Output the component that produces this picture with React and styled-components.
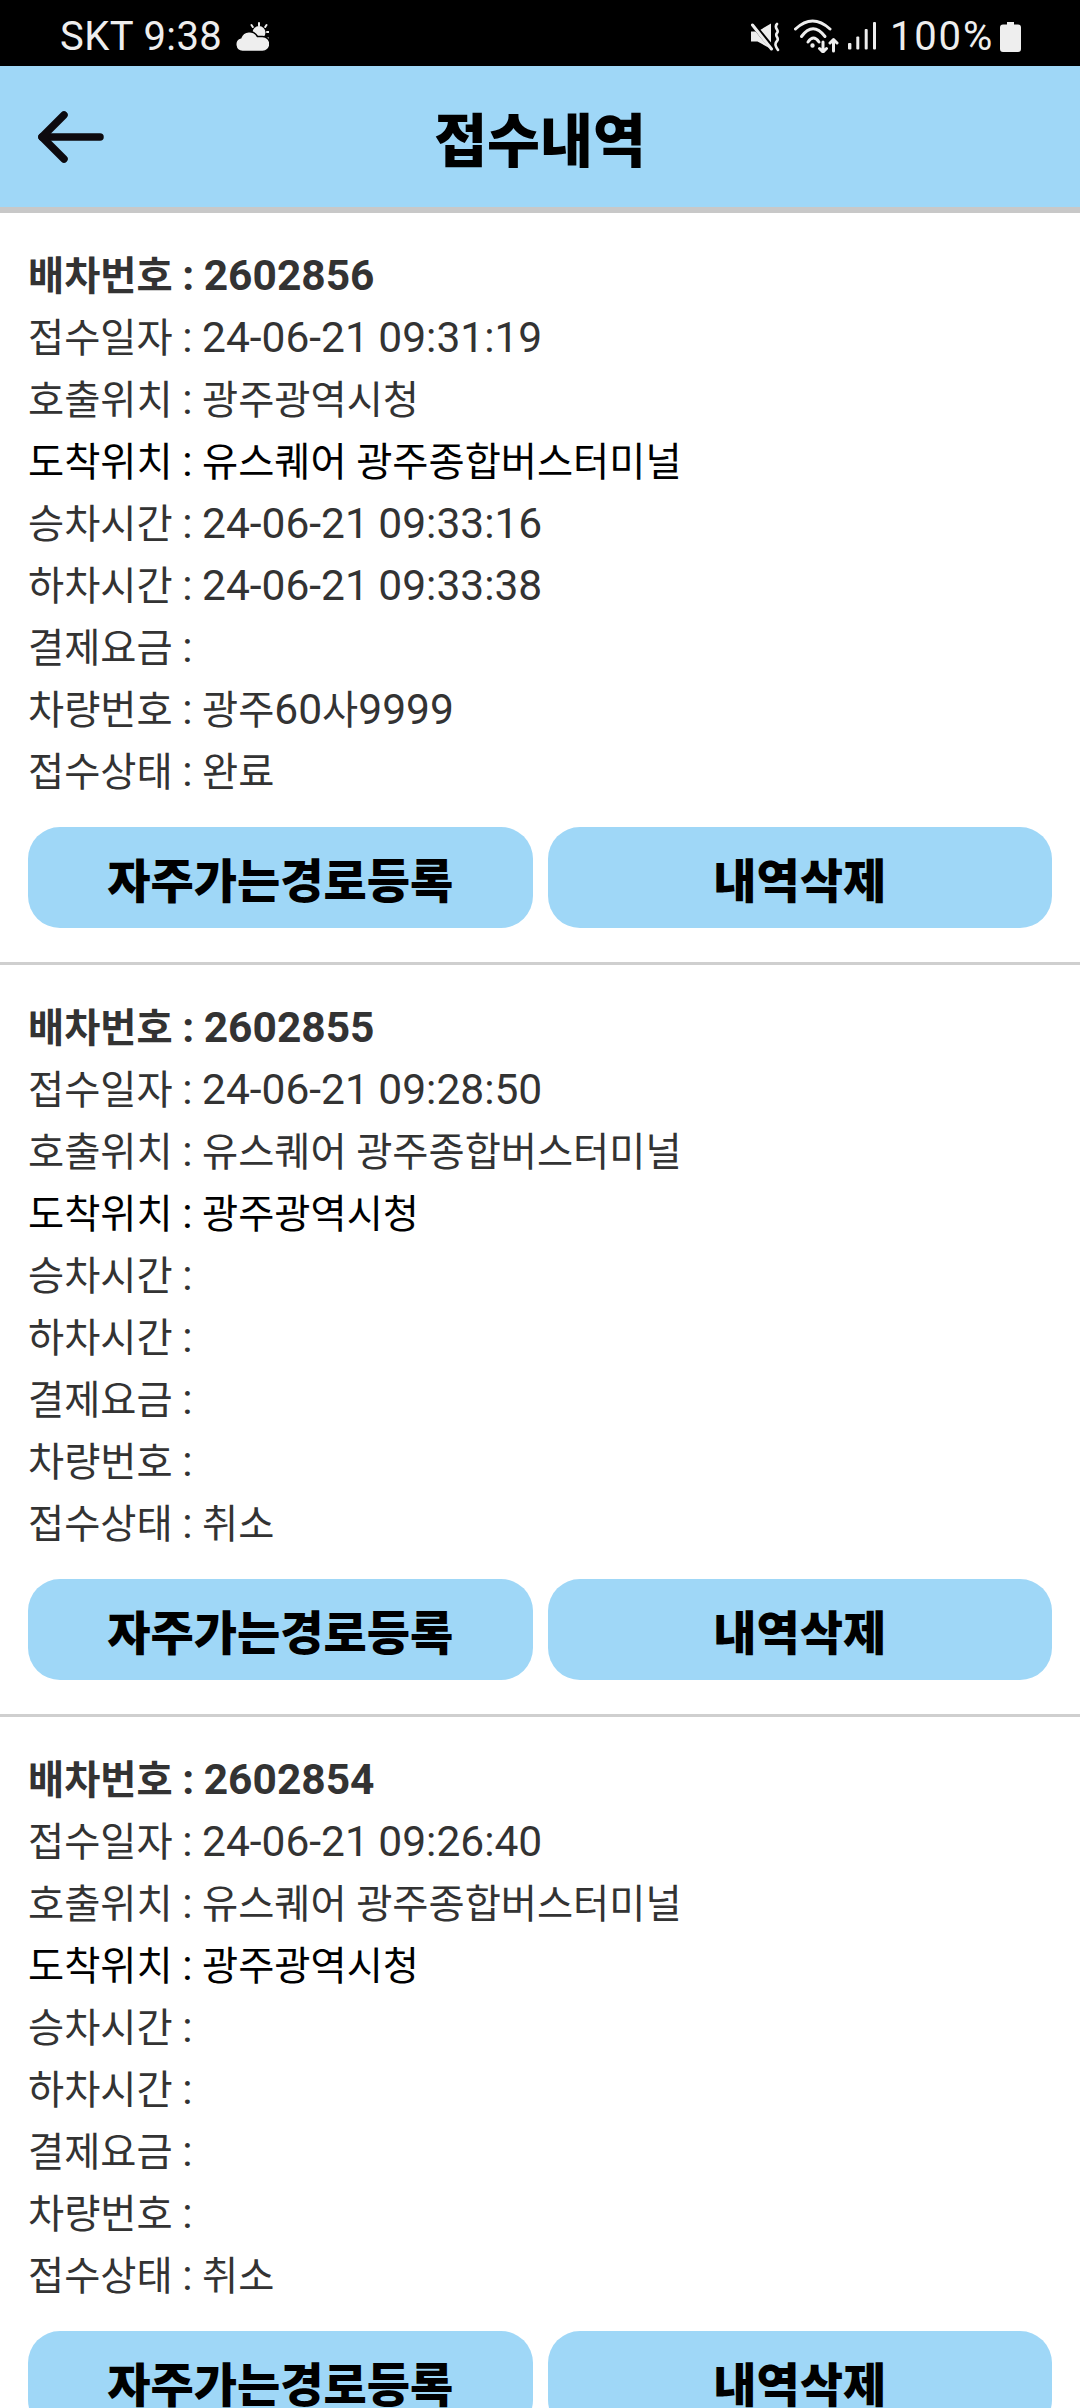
import React from 'react'
import styled, { createGlobalStyle } from 'styled-components'

const GlobalStyle = createGlobalStyle`
    html, body {
        margin: 0;
        padding: 0;
        background: #fff;
    }
    body {
        font-family: Roboto, "Noto Sans CJK KR", sans-serif;
    }
`;

const receipts = [
    {
        id: '2602856',
        date: '24-06-21 09:31:19',
        from: '광주광역시청',
        to: '유스퀘어 광주종합버스터미널',
        board: '24-06-21 09:33:16',
        drop: '24-06-21 09:33:38',
        fare: '',
        car: '광주60사9999',
        status: '완료',
    },
    {
        id: '2602855',
        date: '24-06-21 09:28:50',
        from: '유스퀘어 광주종합버스터미널',
        to: '광주광역시청',
        board: '',
        drop: '',
        fare: '',
        car: '',
        status: '취소',
    },
    {
        id: '2602854',
        date: '24-06-21 09:26:40',
        from: '유스퀘어 광주종합버스터미널',
        to: '광주광역시청',
        board: '',
        drop: '',
        fare: '',
        car: '',
        status: '취소',
    },
];

// hangul runs get their own span, the phone's korean font is narrower than Noto
function mixed(text) {
    return text.split(/([가-힣]+)/).map((part, i) =>
        /[가-힣]/.test(part) ? <Hangul key={i}>{part}</Hangul> : part
    )
}

function WeatherIcon() {
    return (
        <svg width="34" height="40" viewBox="0 13 34 40" fill="#eee">
            <circle cx="24" cy="32.500" r="6.5" />
            <path d="M24 23v2.500M16.500 25l1.300 2M31.500 25l-1.300 2M33.500 32H32M33.500 38.500H32" stroke="#eee" strokeWidth="2" strokeLinecap="round" />
            <path d="M7.500 51.500a7 7 0 0 1-1.800-13.700A9.300 9.300 0 0 1 22.500 36.500h5a7.500 7.500 0 0 1 0 15z" stroke="#000" strokeWidth="1.600" />
        </svg>
    )
}

function MuteIcon() {
    return (
        <svg width="30" height="40" viewBox="0 13 30 40" fill="none">
            <path d="M1 31.500h6.500L21 23.500v25.500L7.500 41.500H1z" fill="#eee" />
            <path d="M1 22l23 28" stroke="#000" strokeWidth="5" />
            <path d="M2.500 25l19 24" stroke="#eee" strokeWidth="3" strokeLinecap="round" />
            <path d="M27 24c-4 4 3 6 0 9s3 5 0 8-1 6 1 9" stroke="#eee" strokeWidth="2.600" strokeLinecap="round" />
        </svg>
    )
}

function WifiIcon() {
    return (
        <svg width="45" height="40" viewBox="0 13 45 40" fill="none" stroke="#eee" strokeWidth="3" strokeLinecap="round" strokeLinejoin="round">
            <path d="M1.500 29Q18.500 13 36 29" />
            <path d="M7.500 36.500Q19 21 31 36.500" />
            <path d="M14 42Q19.500 34 25 42" />
            <circle cx="18.500" cy="45.500" r="1.500" fill="#eee" strokeWidth="1.400" />
            <path d="M29 42v10M25.500 48.500L29 52l3.500-3.500" />
            <path d="M39.500 51V39.500M36 43l3.500-3.500L43 43" />
        </svg>
    )
}

function SignalIcon() {
    return (
        <svg width="28" height="40" viewBox="0 13 28 40" fill="#eee">
            <rect x="0" y="43" width="3.400" height="6.500" rx="1" />
            <rect x="8.300" y="36.500" width="3" height="13" rx="1" />
            <rect x="16.700" y="29" width="3" height="20.500" rx="1" />
            <rect x="25" y="22" width="3" height="27.500" rx="1" />
        </svg>
    )
}

function BatteryIcon() {
    return (
        <svg width="21" height="40" viewBox="0 13 21 40" fill="#eee">
            <path d="M7 22h7v2.500h4a3 3 0 0 1 3 3V49a3 3 0 0 1-3 3H3a3 3 0 0 1-3-3V27.500a3 3 0 0 1 3-3h4z" />
        </svg>
    )
}

function BackIcon() {
    return (
        <svg width="68" height="54" viewBox="0 0 68 54" fill="none" stroke="#0d0a0f" strokeWidth="7.500" strokeLinecap="round" strokeLinejoin="round">
            <path d="M63 27H5" />
            <path d="M27 5L5 27l22 22" />
        </svg>
    )
}

function Row({ label, value, strong, dark }) {
    return (
        <InfoRow $strong={strong} $dark={dark}>
            {mixed(`${label} : ${value}`)}
        </InfoRow>
    )
}

function App() {
    return (
        <Screen>
            <GlobalStyle />
            <StatusBar>
                <StatusLeft>
                    <Carrier>SKT 9:38</Carrier>
                    <WeatherIcon />
                </StatusLeft>
                <StatusRight>
                    <MuteIcon />
                    <IconGap $left={14}><WifiIcon /></IconGap>
                    <IconGap $left={9}><SignalIcon /></IconGap>
                    <Percent>100%</Percent>
                    <IconGap $left={6}><BatteryIcon /></IconGap>
                </StatusRight>
            </StatusBar>
            <Header>
                <BackButton>
                    <BackIcon />
                </BackButton>
                <Title>접수내역</Title>
            </Header>
            {receipts.map((item) => (
                <Card key={item.id}>
                    <Row label="배차번호" value={item.id} strong />
                    <Row label="접수일자" value={item.date} />
                    <Row label="호출위치" value={item.from} />
                    <Row label="도착위치" value={item.to} dark />
                    <Row label="승차시간" value={item.board} />
                    <Row label="하차시간" value={item.drop} />
                    <Row label="결제요금" value={item.fare} />
                    <Row label="차량번호" value={item.car} />
                    <Row label="접수상태" value={item.status} />
                    <Buttons>
                        <ActionButton>자주가는경로등록</ActionButton>
                        <ActionButton>내역삭제</ActionButton>
                    </Buttons>
                </Card>
            ))}
        </Screen>
    )
}

const Screen = styled.div`
    width: 1080px;
    height: 2408px;
    overflow: hidden;
    background: #fff;
`;

const StatusBar = styled.div`
    height: 66px;
    box-sizing: border-box;
    padding: 0 59px 0 60px;
    background: #000;
    color: #eee;
    display: flex;
    align-items: center;
    justify-content: space-between;
    font-size: 40px;
`;

const StatusLeft = styled.div`
    display: flex;
    align-items: center;
    gap: 13px;
`;

const Carrier = styled.span`
    letter-spacing: 0.4px;
    padding-top: 7px;
`;

const StatusRight = styled.div`
    display: flex;
    align-items: center;
`;

const IconGap = styled.div`
    display: flex;
    margin-left: ${(p) => p.$left}px;
`;

const Percent = styled.span`
    margin-left: 14px;
    letter-spacing: 1.8px;
    padding-top: 7px;
`;

const Header = styled.div`
    height: 141px;
    background: #9fd7f7;
    border-bottom: 6px solid #c8c8c8;
    display: grid;
    grid-template-columns: 1fr auto 1fr;
    align-items: center;
`;

const BackButton = styled.div`
    display: flex;
    padding-left: 37px;
`;

const Title = styled.h1`
    margin: 0;
    font-size: 57.5px;
    font-weight: 900;
    color: #000;
`;

const Card = styled.div`
    padding: 32px 28px 34px;
    border-bottom: 3px solid #cfcfcf;
`;

const InfoRow = styled.div`
    height: 62px;
    line-height: 62px;
    font-size: 42.5px;
    word-spacing: -1px;
    white-space: pre;
    color: ${(p) => (p.$dark ? '#000' : '#333')};
    font-weight: ${(p) => (p.$strong ? 700 : 400)};
`;

const Hangul = styled.span`
    font-size: 39.3px;
`;

const Buttons = styled.div`
    display: flex;
    gap: 15px;
    margin-top: 24px;
`;

const ActionButton = styled.div`
    flex: 1;
    height: 101px;
    border-radius: 32px;
    background: #9fd7f7;
    color: #000;
    display: flex;
    align-items: center;
    justify-content: center;
    font-size: 47px;
    font-weight: 900;
`;

export default App
